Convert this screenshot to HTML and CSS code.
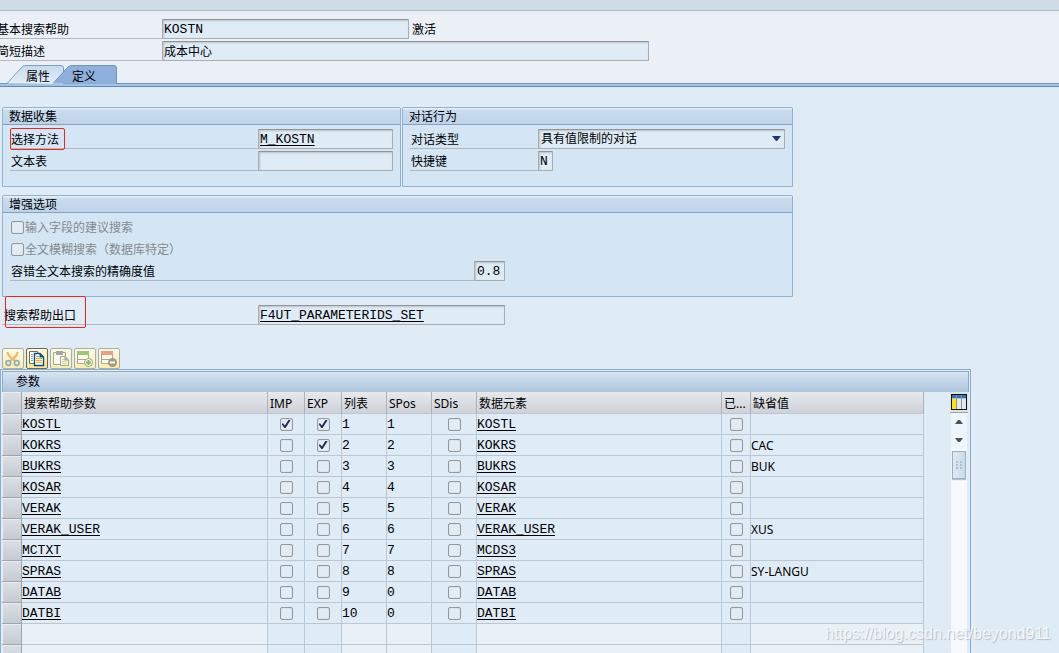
FILE: index.html
```
<!DOCTYPE html>
<html lang="zh-CN">
<head>
<meta charset="utf-8">
<title>搜索帮助</title>
<link rel="stylesheet" href="styles.css">
</head>
<body>
<div class="topband"></div>
<header class="head">
  <div class="row"><label class="lbl head-lbl" for="f-name">基本搜索帮助</label><input class="field mono w-mid" id="f-name" value="KOSTN"><span class="status">激活</span></div>
  <div class="row"><label class="lbl head-lbl" for="f-desc">简短描述</label><input class="field w-long" id="f-desc" value="成本中心"></div>
</header>
<nav class="tabs">
  <button class="tab tab-attr"><svg width="57" height="19" viewBox="0 0 57 19"><defs><linearGradient id="t1" x1="0" y1="0" x2="0" y2="1"><stop offset="0" stop-color="#c6dbee"/><stop offset="1" stop-color="#e4eef7"/></linearGradient></defs><path d="M0 18.500 L15 2 Q17 .5 19 .5 H54 Q56.500 .5 56.500 3 V19" fill="url(#t1)" stroke="#7f9fc4"/></svg><span>属性</span></button>
  <button class="tab tab-def"><svg width="64" height="19" viewBox="0 0 64 19"><path d="M0 18.500 L15 2 Q17 .5 19 .5 H61 Q63.500 .5 63.500 3 V19" fill="#8db1dc" stroke="#6d93c0"/></svg><span>定义</span></button>
</nav>
<main class="page">
  <div class="groups">
    <section class="group g-data">
      <h2>数据收集</h2>
      <div class="gbody">
        <div class="row"><label class="lbl" for="f-sel">选择方法</label><input class="field mono link w-small" id="f-sel" value="M_KOSTN"><i class="mark mark-sel"></i></div>
        <div class="row"><label class="lbl" for="f-txt">文本表</label><input class="field mono w-small" id="f-txt"></div>
      </div>
    </section>
    <section class="group g-dialog">
      <h2>对话行为</h2>
      <div class="gbody">
        <div class="row"><label class="lbl dlg-lbl" for="f-type">对话类型</label><span class="pick"><select class="field" id="f-type"><option>具有值限制的对话</option></select><svg width="9" height="5" viewBox="0 0 9 5"><path d="M0 0H9L5 5H4Z" fill="#24366c"/></svg></span></div>
        <div class="row"><label class="lbl dlg-lbl" for="f-key">快捷键</label><input class="field mono w-char" id="f-key" value="N"></div>
      </div>
    </section>
    <section class="group g-opt">
      <h2>增强选项</h2>
      <div class="gbody">
        <label class="row check"><input type="checkbox" disabled><span>输入字段的建议搜索</span></label>
        <label class="row check"><input type="checkbox" disabled><span>全文模糊搜索（数据库特定）</span></label>
        <div class="row"><label class="lbl opt-lbl" for="f-acc">容错全文本搜索的精确度值</label><input class="field mono w-num" id="f-acc" value="0.8"></div>
      </div>
    </section>
  </div>
  <div class="row exit"><label class="lbl exit-lbl" for="f-exit">搜索帮助出口</label><input class="field mono link w-mid" id="f-exit" value="F4UT_PARAMETERIDS_SET"><i class="mark mark-exit"></i></div>
  <div class="tools">
    <button class="tool off" aria-label="剪切"><svg width="18" height="18" viewBox="0 0 18 18" fill="none"><path d="M3.500 2Q4 6 9 9L12 11.500M13.500 2Q13 6 9 9L5 11.500" stroke="#e8932c" stroke-width="2.200"/><circle cx="4.300" cy="13" r="2.300" stroke="#4284b8" stroke-width="1.700"/><circle cx="12.700" cy="13" r="2.300" stroke="#4284b8" stroke-width="1.700"/></svg></button>
    <button class="tool on" aria-label="复制"><svg width="18" height="18" viewBox="0 0 18 18"><path d="M1.500 13.500V1.500H9.500V13.500Z" fill="#fff" stroke="#5c6d7c"/><path d="M3 4.500H5M3 6.500H5M3 8.500H5M3 10.500H5" stroke="#999"/><path d="M6.500 3.500H12L15.500 7V15.500H6.500Z" fill="#fff" stroke="#0a5083" stroke-width="1.400"/><path d="M11.500 3V7.500H16Z" fill="#0a5083"/><path d="M8 6.500H11M8 8.500H14M8 10.500H14M8 12.500H14" stroke="#f3ad14"/></svg></button>
    <button class="tool off" aria-label="粘贴"><svg width="18" height="18" viewBox="0 0 18 18"><path d="M1.500 2.500H13.500V14.500H1.500Z" fill="#fff" stroke="#68727c"/><path d="M4 1H11V5H4Z" fill="#6a7076"/><path d="M8.500 6.500H13L16.500 10V15.500H8.500Z" fill="#fff" stroke="#377ba8"/><path d="M12.500 6.500V10.500H16.500Z" fill="#377ba8"/><path d="M10 9.500H12M10 11.500H15M10 13.500H15" stroke="#efad1c"/></svg></button>
    <button class="tool off" aria-label="插入行"><svg width="18" height="18" viewBox="0 0 18 18"><path d="M1.500 1.500H12.500V13.500H1.500Z" fill="#fff" stroke="#777"/><path d="M1 1H13V5H1Z" fill="#62a535"/><path d="M1.500 9.500H11" stroke="#777"/><circle cx="12.500" cy="12.500" r="4" fill="#f2faef" stroke="#54705d"/><path d="M10 12.500H15M12.500 10V15" stroke="#369236" stroke-width="2"/></svg></button>
    <button class="tool off" aria-label="删除行"><svg width="18" height="18" viewBox="0 0 18 18"><path d="M1.500 1.500H12.500V13.500H1.500Z" fill="#fff" stroke="#777"/><path d="M1 1H13V5H1Z" fill="#dc6640"/><path d="M1.500 9.500H11" stroke="#777"/><circle cx="12.500" cy="12.500" r="4.500" fill="#666"/><path d="M10 12.500H15" stroke="#fff" stroke-width="2"/></svg></button>
  </div>
  <section class="panel">
    <h2 class="ptitle">参数</h2>
    <div class="pbody">
      <table class="grid">
        <colgroup><col class="c-sel"><col class="c-name"><col class="c-chk"><col class="c-chk"><col class="c-num"><col class="c-num"><col class="c-num"><col class="c-elem"><col class="c-mod"><col class="c-def"></colgroup>
        <thead><tr><th></th><th>搜索帮助参数</th><th>IMP</th><th>EXP</th><th>列表</th><th>SPos</th><th>SDis</th><th>数据元素</th><th>已...</th><th>缺省值</th></tr></thead>
        <tbody id="rows"></tbody>
      </table>
      <div class="side">
        <button class="cfg" aria-label="配置"><svg width="16" height="16" viewBox="0 0 16 16"><path d="M0 0H16V16H0Z" fill="#111"/><path d="M1 1H15V4H1Z" fill="#3274bc"/><path d="M1 5H5V15H1Z" fill="#ffe600"/><path d="M6 5H10V15H6ZM11 5H15V15H11Z" fill="#e4e8ec"/><path d="M1 4H15V5H1Z" fill="#a9c6e2"/><path d="M5.500 1V15M10.500 1V15" stroke="#8c969f"/></svg></button>
        <button class="arrow" aria-label="向上"><svg width="8" height="4" viewBox="0 0 8 4"><path d="M0 4L3 0H5L8 4Z" fill="#4a5563"/></svg></button>
        <button class="arrow" aria-label="向下"><svg width="8" height="4" viewBox="0 0 8 4"><path d="M0 0L3 4H5L8 0Z" fill="#4a5563"/></svg></button>
        <div class="thumb"><svg width="6" height="8" viewBox="0 0 6 8"><path d="M0 1H2M4 1H6M0 4H2M4 4H6M0 7H2M4 7H6" stroke="#a5b7ca" stroke-width="1.500"/></svg></div>
      </div>
    </div>
  </section>
</main>
<div class="watermark">https://blog.csdn.net/beyond911</div>
<script src="rows.js"></script>
</body>
</html>
```
FILE: rows.js
```
const rows = [
  ["KOSTL", 1, 1, 1, 1, "KOSTL", ""],
  ["KOKRS", 0, 1, 2, 2, "KOKRS", "CAC"],
  ["BUKRS", 0, 0, 3, 3, "BUKRS", "BUK"],
  ["KOSAR", 0, 0, 4, 4, "KOSAR", ""],
  ["VERAK", 0, 0, 5, 5, "VERAK", ""],
  ["VERAK_USER", 0, 0, 6, 6, "VERAK_USER", "XUS"],
  ["MCTXT", 0, 0, 7, 7, "MCDS3", ""],
  ["SPRAS", 0, 0, 8, 8, "SPRAS", "SY-LANGU"],
  ["DATAB", 0, 0, 9, 0, "DATAB", ""],
  ["DATBI", 0, 0, 10, 0, "DATBI", ""]
];
const box = (on, name) => `<td class="chk"><input type="checkbox" aria-label="${name}"${on ? " checked" : ""}></td>`;
const link = t => `<td><a class="mono" href="#">${t}</a></td>`;
const html = rows.map(([n, i, e, l, p, d, v]) =>
  `<tr><th scope="row"></th>${link(n)}${box(i, "IMP " + n)}${box(e, "EXP " + n)}<td class="mono">${l}</td><td class="mono">${p}</td>${box(0, "SDis " + n)}${link(d)}${box(0, "已修改 " + n)}<td>${v}</td></tr>`).join("");
const blank = '<tr class="blank"><th></th><td></td><td class="chk"></td><td class="chk"></td><td></td><td></td><td class="chk"></td><td></td><td class="chk"></td><td></td></tr>';
document.getElementById("rows").innerHTML = html + blank + blank;
```
FILE: styles.css
```
* { box-sizing: border-box; }
body {
  margin: 0;
  height: 100vh;
  overflow: hidden;
  position: relative;
  background: #dfebf5;
  color: #000;
  font: 12px/18px "Noto Sans", "Noto Sans CJK SC", sans-serif;
}
h2 { margin: 0; font-size: 12px; font-weight: 400; }
button, input, select { font: inherit; color: inherit; margin: 0; }
button { padding: 0; }
svg { display: block; }
.mono { font-family: "Liberation Mono", "Noto Sans CJK SC", monospace; font-size: 13px; }
.topband { height: 11px; background: #cfdce6; border-bottom: 1px solid #a9b9c9; }
.head { padding-top: 8px; height: 54px; background: #eaf0f6; }
.row { display: flex; height: 20px; margin-bottom: 2px; position: relative; }
.lbl { width: 248px; padding: 2px 0 0 1px; border-bottom: 1px solid #b4b8bd; flex: none; line-height: 18px; white-space: nowrap; }
.head-lbl { width: 162px; padding-left: 0; text-indent: -3px; }
.dlg-lbl { width: 128px; }
.opt-lbl { width: 464px; }
.exit-lbl { width: 256px; padding-left: 2px; }
.field {
  height: 20px;
  padding: 0 1px;
  background: #dfebf5;
  border: 1px solid #a9adb0;
  border-top-color: #909497;
  border-radius: 1px;
  box-shadow: inset 1px 1px 2px #b9c4cd;
  outline: 0;
}
.link { text-decoration: underline; text-underline-offset: 2px; }
.w-mid { width: 247px; }
.w-long { width: 487px; }
.w-small { width: 135px; }
.w-char { width: 15px; }
.w-num { width: 31px; padding-left: 2px; }
.status { padding: 2px 0 0 3px; }
.tabs { display: flex; height: 22px; padding-left: 7px; background: linear-gradient(#eaf0f6 18px, #6f97c2 18px, #6f97c2 19px, #a3c3e5 19px, #a3c3e5 21px, #5f8abb 21px); }
.tab { position: relative; height: 19px; border: 0; background: none; text-align: left; }
.tab svg { position: absolute; inset: 0; }
.tab span { position: relative; display: block; padding: 3px 0 0 19px; line-height: 18px; }
.tab-attr { width: 57px; }
.tab-def { width: 64px; margin-left: -11px; }
.page { padding-top: 20px; }
.groups { display: grid; grid-template-columns: 399fr 391fr; gap: 8px 1px; max-width: 791px; margin-left: 2px; }
.group { border: 1px solid #92b1d3; border-radius: 2px 2px 0 0; background: #d4e6f4; }
.group h2 { height: 17px; line-height: 17px; padding-left: 6px; border-bottom: 1px solid #839fc4; background: linear-gradient(#e5effa 1px, #cbdcee 2px, #bdd5e9); }
.g-opt { grid-column: 1 / 3; }
.gbody { padding: 4px 7px 13px; }
.check { color: #85898e; padding-left: 1px; }
.check input { margin: 4px 1px 0 0; }
.check span { padding-top: 2px; }
input[type="checkbox"] {
  appearance: none;
  width: 13px;
  height: 13px;
  flex: none;
  border: 1px solid #96989b;
  border-radius: 2px;
  background: #e2ecf5;
  box-shadow: inset 0 0 1px #aab3bb;
}
input[type="checkbox"]:checked::before {
  content: "";
  display: block;
  width: 9px;
  height: 9px;
  margin: 1px;
  background: #25294a;
  clip-path: polygon(0 50%, 16% 42%, 38% 66%, 80% 0, 100% 8%, 45% 94%, 32% 94%);
}
.pick { position: relative; width: 247px; }
.pick select { appearance: none; width: 100%; padding-left: 2px; display: block; }
.pick svg { position: absolute; right: 4px; top: 7px; }
.mark { position: absolute; border: 1px solid #f5221c; border-radius: 2px; pointer-events: none; }
.mark-sel { left: 0; top: -1px; width: 55px; height: 22px; }
.mark-exit { left: 3px; top: -9px; width: 81px; height: 32px; }
.exit { margin: 8px 0 0 2px; }
.tools { display: flex; gap: 2px; padding: 23px 0 0 2px; }
.tool { width: 22px; height: 21px; display: grid; place-items: center; border: 1px solid #aeac9b; border-radius: 2px; background: linear-gradient(#fdfbe9, #fbedaa); }
.on { border-color: #6f6a4c; background: linear-gradient(#fffbe0, #fbe588); }
.off svg { opacity: .6; }
.panel { max-width: 971px; padding: 1px; border: 1px solid #8dabd0; }
.ptitle { height: 21px; line-height: 20px; padding-left: 13px; border: 1px solid #8fadc9; border-bottom: 0; background: linear-gradient(#d5e4ef, #adc5de); }
.pbody { display: flex; justify-content: space-between; }
.grid { table-layout: fixed; width: 922px; border-collapse: separate; border-spacing: 0; }
.c-sel { width: 20px; }
.c-name { width: 246px; }
.c-chk { width: 37px; }
.c-num { width: 45px; }
.c-elem { width: 245px; }
.c-mod { width: 29px; }
.c-def { width: 173px; }
.grid th, .grid td { height: 21px; padding: 2px 0 0; border: solid #bac7d5; border-width: 0 1px 1px 0; line-height: 18px; text-align: left; font-weight: 400; white-space: nowrap; }
.grid thead th { height: 22px; padding: 3px 0 0 2px; border-right-color: #a9b1ba; background: linear-gradient(#e7e9eb, #cdd2d8); }
.grid tr th:first-child { border-color: #9aa6b2; background: linear-gradient(#dce0e4, #c4cbd2); box-shadow: inset 1px 1px #e9edf0; }
.grid td.chk { padding: 0; background: #dfebf5; }
.chk input { display: block; margin: 0 auto; }
.grid a { display: block; color: inherit; text-underline-offset: 2px; }
.blank td { background: #e9f0f6; }
.side { width: 16px; margin-right: 2px; display: flex; flex-direction: column; align-items: center; background: #f7f9fc; }
.cfg { width: 18px; height: 21px; display: grid; place-items: center; border: 0; border-bottom: 1px solid #98a0a8; background: #dde2e6; }
.arrow { width: 16px; height: 18px; display: grid; place-items: center; border: 0; background: #f0f5fa; }
.thumb { width: 14px; height: 28px; margin-top: 2px; display: grid; place-items: center; border: 1px solid #9aafc3; background: linear-gradient(90deg, #dfe9f3, #c9dbea); box-shadow: 0 1px 1px #b6c2ce; }
.watermark { position: absolute; right: 8px; bottom: 8px; font: 16px/22px "Liberation Sans", sans-serif; color: #f3f7fb; text-shadow: 1px 1px 1px #b5bcc4; pointer-events: none; }
```
